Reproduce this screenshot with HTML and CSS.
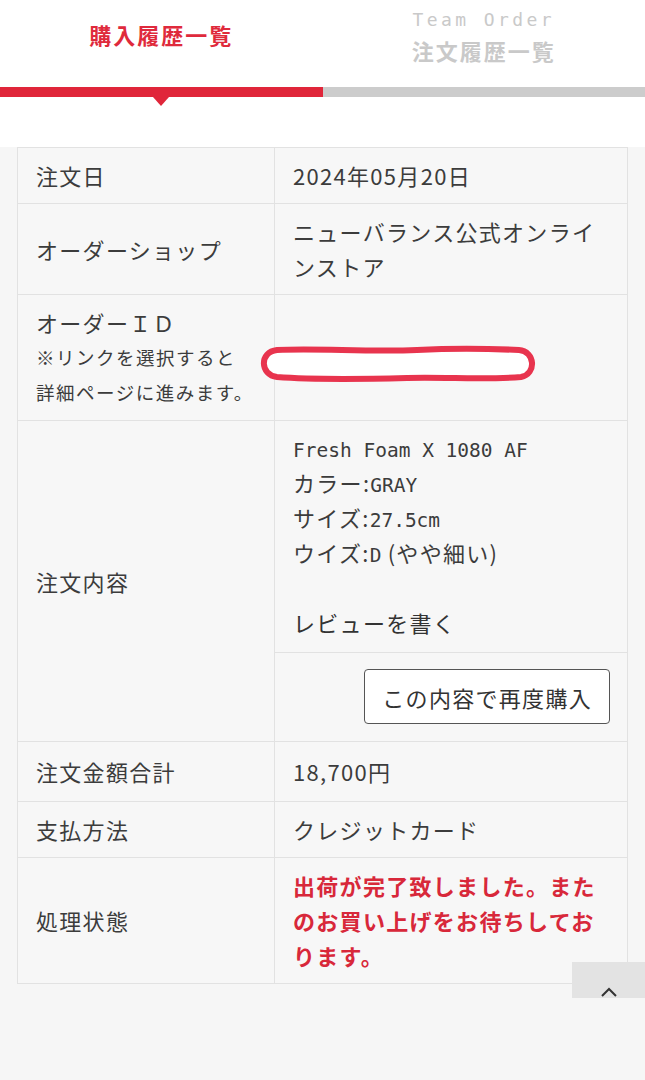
FILE: index.html
```html
<!DOCTYPE html>
<html lang="ja">
  <head>
    <meta charset="UTF-8" />
    <meta name="viewport" content="width=device-width, initial-scale=1.0" />
    <title>購入履歴一覧</title>
    <link rel="stylesheet" href="styles.css">
  </head>
  <body>
    <div class="tabs-wrap">
      <div class="tabs">
        <a class="tab active" href="#">購入履歴一覧</a>
        <a class="tab" href="#">
          <span class="tab-en">Team Order</span>
          <span class="tab-jp">注文履歴一覧</span>
        </a>
      </div>
    </div>

    <div class="order-container">
      <table class="order-table">
        <tr>
          <th>注文日</th>
          <td>2024年05月20日</td>
        </tr>
        <tr>
          <th>オーダーショップ</th>
          <td>ニューバランス公式オンラインストア</td>
        </tr>
        <tr>
          <th>
            オーダーＩＤ
            <span class="note">※リンクを選択すると<br />詳細ページに進みます。</span>
          </th>
          <td class="order-id">
            <svg class="scribble" width="282" height="40" viewBox="0 0 282 40">
              <path d="M20 6 C 60 4, 110 8, 160 6 C 200 4, 240 5, 262 6 C 278 7, 280 30, 264 33 C 230 36, 190 33, 150 34 C 110 35, 60 36, 20 33 C 3 31, 2 8, 20 6 Z" fill="#ffffff" stroke="#e8344e" stroke-width="6" />
            </svg>
          </td>
        </tr>
        <tr>
          <th rowspan="2">注文内容</th>
          <td class="product">
            <span class="mono">Fresh Foam X 1080 AF</span><br />
            カラー:<span class="mono">GRAY</span><br />
            サイズ:<span class="mono">27.5cm</span><br />
            ウイズ:<span class="mono">D</span> (やや細い)<br />
            <br />
            <a class="review" href="#">レビューを書く</a>
          </td>
        </tr>
        <tr>
          <td class="rebuy">
            <button type="button">この内容で再度購入</button>
          </td>
        </tr>
        <tr class="total">
          <th>注文金額合計</th>
          <td>18,700円</td>
        </tr>
        <tr>
          <th>支払方法</th>
          <td>クレジットカード</td>
        </tr>
        <tr>
          <th>処理状態</th>
          <td class="status">出荷が完了致しました。またのお買い上げをお待ちしております。</td>
        </tr>
      </table>
    </div>

    <a class="page-top" href="#">
      <svg width="20" height="12" viewBox="0 0 20 12">
        <path d="M3 10 L10 3 L17 10" fill="none" stroke="#333" stroke-width="2" />
      </svg>
    </a>
  </body>
</html>
```

FILE: styles.css
```css
body {
  font-family: "Noto Sans CJK JP", "Noto Sans", sans-serif;
  background-color: #f6f6f6;
  color: #3c3c3c;
  margin: 0;
}
.tabs-wrap {
  background-color: #ffffff;
  padding-bottom: 50px;
}
.tabs {
  display: grid;
  grid-template-columns: 1fr 1fr;
}
.tab {
  position: relative;
  display: flex;
  flex-direction: column;
  align-items: center;
  height: 87px;
  border-bottom: 10px solid #cccccc;
  text-decoration: none;
  font-weight: bold;
  font-size: 22px;
  letter-spacing: 2px;
  color: #c9c9c9;
}
.tab.active {
  border-bottom-color: #e0263a;
  color: #df2a3c;
  padding-top: 17px;
  height: 70px;
  line-height: 34px;
}
.tab.active::after {
  content: "";
  position: absolute;
  left: 50%;
  bottom: -19px;
  margin-left: -8px;
  border-left: 8px solid transparent;
  border-right: 8px solid transparent;
  border-top: 9px solid #e0263a;
}
.tab-en {
  font-family: "DejaVu Sans Mono", monospace;
  font-weight: normal;
  font-size: 18px;
  letter-spacing: 3.4px;
  line-height: 22px;
  margin-top: 9px;
}
.tab-jp {
  line-height: 34px;
  margin-top: 2px;
}
.order-container {
  padding: 0 17px 60px;
}
.order-table {
  width: 100%;
  border-collapse: collapse;
  background-color: #f7f7f7;
  border: 1px solid #e2e2e2;
  font-size: 22px;
  letter-spacing: 1.3px;
  line-height: 35px;
}
.order-table th,
.order-table td {
  border: 1px solid #e2e2e2;
  padding: 10px 18px;
  text-align: left;
  vertical-align: middle;
  font-weight: normal;
}
.order-table th {
  width: 220px;
}
.note {
  display: block;
  font-size: 18.5px;
  letter-spacing: 1.5px;
}
.order-id {
  position: relative;
}
.scribble {
  position: absolute;
  left: -18px;
  top: 49px;
}
.order-table .product {
  padding-top: 9px;
  padding-bottom: 12px;
}
.mono {
  font-family: "DejaVu Sans Mono", monospace;
  font-size: 19.5px;
  letter-spacing: 0;
  line-height: 1;
}
.review {
  color: #333333;
  text-decoration: none;
}
.order-table .rebuy {
  text-align: right;
  padding: 16px 17px 17px;
}
.rebuy button {
  font-family: inherit;
  font-size: 22px;
  letter-spacing: 1.3px;
  color: #333333;
  background-color: #ffffff;
  border: 1px solid #555555;
  border-radius: 4px;
  height: 55px;
  padding: 0 17px;
  cursor: pointer;
}
.order-table .total td,
.order-table .total th {
  padding-top: 12px;
  padding-bottom: 12px;
}
.order-table .status {
  color: #d8283a;
  font-weight: bold;
}
.page-top {
  position: fixed;
  right: 0;
  top: 962px;
  width: 73px;
  height: 36px;
  background-color: #e3e3e3;
  display: flex;
  justify-content: center;
  align-items: flex-end;
}
```
